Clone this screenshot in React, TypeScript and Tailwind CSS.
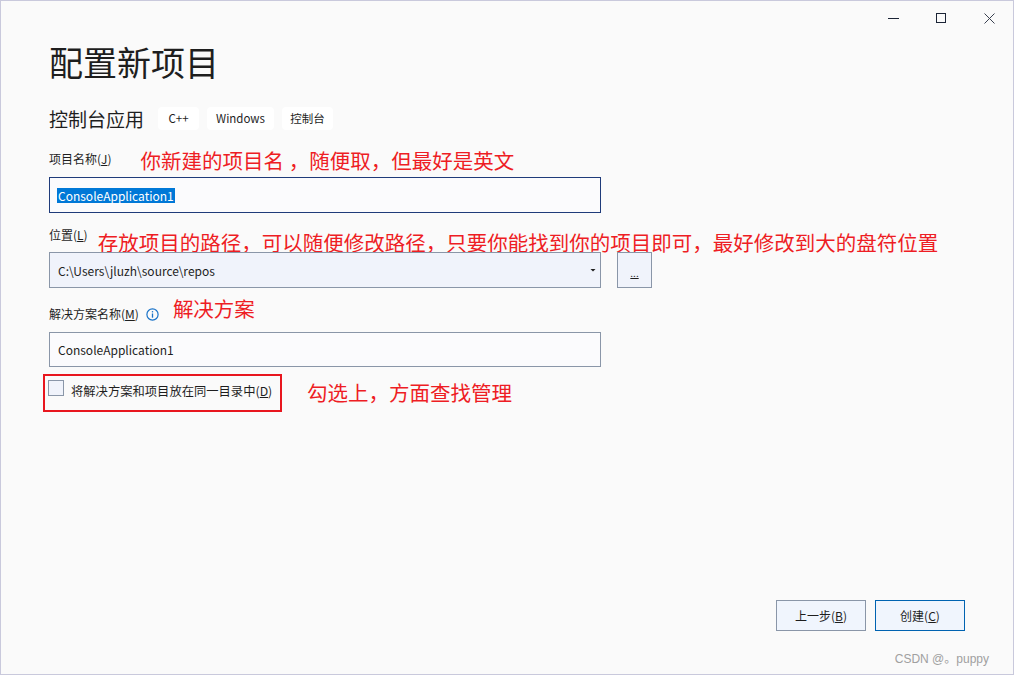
import React from "react";

const F = { fontFamily: '"Noto Sans CJK SC", "Noto Sans", sans-serif' };

function Note({ children, className = "" }: { children: React.ReactNode; className?: string }) {
  return <span className={"text-[20.5px] leading-[20px] text-[#ee1d24] whitespace-nowrap " + className}>{children}</span>;
}

export default function App() {
  return (
    <div style={F} className="w-[1014px] h-[675px] border border-[#c9c9dc] bg-[#fafafa] flex flex-col overflow-hidden">
      {/* title bar */}
      <div className="h-[34px] flex justify-end items-center shrink-0">
        <div className="w-[48px] h-[34px] flex items-center justify-center">
          <div className="w-[11px] h-[1px] bg-[#1b2436]" />
        </div>
        <div className="w-[48px] h-[34px] flex items-center justify-center">
          <div className="w-[10px] h-[10px] border border-[#1b2436]" />
        </div>
        <div className="w-[48px] h-[34px] flex items-center justify-center">
          <svg width="11" height="11" viewBox="0 0 11 11">
            <path d="M0.5 0.5 L10.5 10.5 M10.5 0.5 L0.5 10.5" stroke="#3a4150" strokeWidth="1" />
          </svg>
        </div>
      </div>

      <div className="px-[48px] flex flex-col">
        <h1 className="mt-[10px] text-[34px] leading-[34px] text-[#1e1e1e] font-normal">配置新项目</h1>

        <div className="mt-[28px] flex items-center h-[23px]">
          <span className="text-[19px] leading-[20px] text-[#1e1e1e]">控制台应用</span>
          <div className="ml-[14px] flex gap-[8px]">
            <span className="bg-white rounded-[4px] h-[23px] w-[41px] flex items-center justify-center text-[11.5px] text-[#1e1e1e]">C++</span>
            <span className="bg-white rounded-[4px] h-[23px] w-[67px] flex items-center justify-center text-[11.5px] text-[#1e1e1e]">Windows</span>
            <span className="bg-white rounded-[4px] h-[23px] w-[51px] flex items-center justify-center text-[11.5px] text-[#1e1e1e]">控制台</span>
          </div>
        </div>

        {/* project name */}
        <div className="mt-[20px] flex items-start">
          <span className="mt-[3px] text-[12px] leading-[12px] text-[#1e1e1e]">项目名称(<span className="underline">J</span>)</span>
          <Note className="ml-[29px]">你新建的项目名 ，随便取，但最好是英文</Note>
        </div>
        <div className="mt-[7px] w-[552px] h-[36px] border border-[#1f3b7a] bg-[#fbfbfd] flex items-center px-[7px]">
          <span className="bg-[#0078d7] text-white text-[12px] leading-[15px] px-[1px]">ConsoleApplication1</span>
        </div>

        {/* location */}
        <div className="mt-[16px] flex items-start">
          <span className="text-[12px] leading-[12px] text-[#1e1e1e]">位置(<span className="underline">L</span>)</span>
          <Note className="ml-[10px] mt-[3px]">存放项目的路径，可以随便修改路径，只要你能找到你的项目即可，最好修改到大的盘符位置</Note>
        </div>
        <div className="flex items-center gap-[16px]">
          <div className="w-[552px] h-[36px] border border-[#8a96a8] bg-[#f0f3fb] flex items-center justify-between pl-[8px] pr-[3px]">
            <span className="text-[12px] leading-[15px] text-[#1e1e1e]">C:\Users\jluzh\source\repos</span>
            <svg width="8" height="8" viewBox="0 0 8 8"><path d="M1.5 3 L6.5 3 L4 5.5 Z" fill="#1e1e1e" /></svg>
          </div>
          <div className="w-[35px] h-[36px] border border-[#8a96a8] bg-[#f0f3fb] flex items-end justify-center pb-[10px]">
            <span className="text-[10px] leading-[8px] text-[#1e1e1e] underline">...</span>
          </div>
        </div>

        {/* solution name */}
        <div className="mt-[10px] flex items-start">
          <span className="mt-[10px] text-[12px] leading-[12px] text-[#1e1e1e]">解决方案名称(<span className="underline">M</span>)</span>
          <svg className="ml-[7px] mt-[10px]" width="13" height="13" viewBox="0 0 13 13">
            <circle cx="6.5" cy="6.5" r="5.6" fill="none" stroke="#1a73c8" strokeWidth="1.2" />
            <rect x="5.85" y="5.5" width="1.3" height="4.2" fill="#1a73c8" />
            <rect x="5.85" y="3.1" width="1.3" height="1.3" fill="#1a73c8" />
          </svg>
          <Note className="ml-[14px]">解决方案</Note>
        </div>
        <div className="mt-[11px] w-[552px] h-[35px] border border-[#8a96a8] bg-[#fbfbfd] flex items-center px-[8px]">
          <span className="text-[12px] leading-[15px] text-[#1e1e1e]">ConsoleApplication1</span>
        </div>

        {/* checkbox */}
        <div className="mt-[7px] flex items-start">
          <div className="ml-[-6px] w-[239px] h-[38px] border-2 border-[#e8161e] flex items-start pl-[3px] pt-[4px]">
            <div className="w-[16px] h-[16px] border border-[#8a96a8] bg-[#f0f3fb] shrink-0" />
            <span className="ml-[7px] mt-[5px] text-[12.3px] leading-[13px] text-[#1e1e1e] whitespace-nowrap">将解决方案和项目放在同一目录中(<span className="underline">D</span>)</span>
          </div>
          <Note className="ml-[25px] mt-[8px]">勾选上，方面查找管理</Note>
        </div>
      </div>

      <div className="flex-1" />

      {/* buttons */}
      <div className="flex justify-end gap-[9px] pr-[48px]">
        <div className="w-[90px] h-[31px] border border-[#8a96a8] bg-[#f0f5fd] flex items-center justify-center text-[12px] text-[#1e1e1e]">
          上一步(<span className="underline">B</span>)
        </div>
        <div className="w-[90px] h-[31px] border border-[#0063b1] bg-[#f0f5fd] flex items-center justify-center text-[12px] text-[#1e1e1e]">
          创建(<span className="underline">C</span>)
        </div>
      </div>
      <div className="h-[43px] flex justify-end items-start pr-[24px] pt-[22px] shrink-0">
        <span className="text-[12px] leading-[12px] text-[#a0a0a0]" style={{ fontFamily: '"Liberation Sans", "Noto Sans CJK SC", sans-serif' }}>CSDN @。puppy</span>
      </div>
    </div>
  );
}
